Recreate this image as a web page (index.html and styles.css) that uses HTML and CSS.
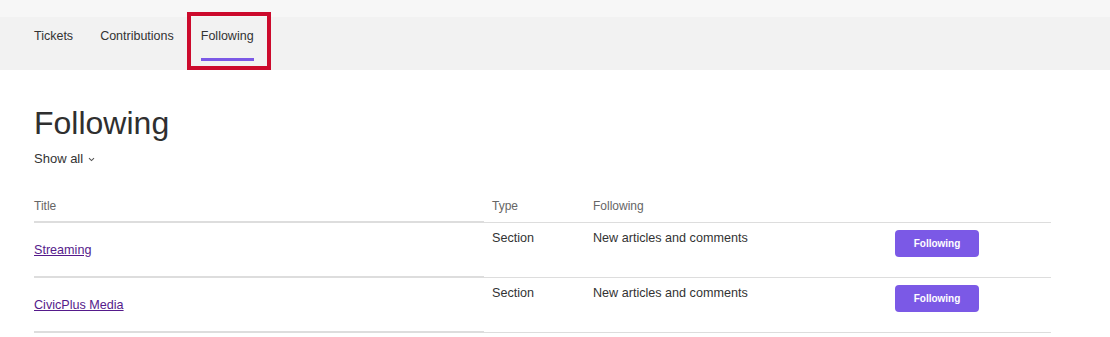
FILE: index.html
```html
<!doctype html>
<html>
	<head>
		<meta charset="utf-8" />
		<title>Following</title>
		<link rel="stylesheet" href="styles.css">
	</head>
	<body>
		<div class="top-strip"></div>
		<div class="nav">
			<a href="#tickets" class="nav-item">Tickets</a>
			<a href="#contributions" class="nav-item">Contributions</a>
			<a href="#following" class="nav-item nav-item-active">Following</a>
			<span class="highlight-box"></span>
		</div>

		<div class="content">
			<h1>Following</h1>
			<a href="#filter" class="filter">Show all
				<svg class="chevron" width="7" height="5" viewBox="0 0 7 5"><path d="M1 1.2 L3.5 3.6 L6 1.2" fill="none" stroke="#555" stroke-width="1.1" /></svg>
			</a>

			<table class="follow-table">
				<colgroup>
					<col class="col-title">
					<col class="col-type">
					<col class="col-following">
					<col>
				</colgroup>
				<thead>
					<tr>
						<th class="cell-title">Title</th>
						<th>Type</th>
						<th>Following</th>
						<th></th>
					</tr>
				</thead>
				<tbody>
					<tr>
						<td class="cell-title"><a href="#streaming" class="item-link">Streaming</a></td>
						<td>Section</td>
						<td>New articles and comments</td>
						<td class="cell-action"><button class="btn">Following</button></td>
					</tr>
					<tr>
						<td class="cell-title"><a href="#civicplus-media" class="item-link">CivicPlus Media</a></td>
						<td>Section</td>
						<td>New articles and comments</td>
						<td class="cell-action"><button class="btn">Following</button></td>
					</tr>
				</tbody>
			</table>
		</div>
	</body>
</html>
```

FILE: styles.css
```css
html, body, div, h1, table, th, td { margin: 0; padding: 0; }
body { font-family: "Liberation Sans", Arial, sans-serif; color: #333; background: #fff; }
a { text-decoration: none; color: #333; }

.top-strip { height: 17px; background: #f7f7f7; }

.nav { position: relative; display: flex; height: 53px; padding-left: 34px; background: #f2f2f2; }
.nav-item { display: block; margin-right: 27px; padding: 10px 0 13px; line-height: 18px; font-size: 12.5px; color: #333; border-bottom: 3px solid transparent; height: 18px; }
.nav-item-active { border-bottom-color: #7b59e6; }
.highlight-box { position: absolute; left: 187px; top: -5px; width: 76px; height: 50px; border: 4px solid #cc0a2c; }

.content { padding: 0 34px; width: 1017px; }
h1 { margin-top: 34px; font-size: 32px; line-height: 38px; font-weight: normal; color: #2f2f2f; }
.filter { display: inline-flex; align-items: center; margin-top: 8px; font-size: 13px; line-height: 18px; color: #333; }
.chevron { margin-left: 5px; margin-top: 1px; }

.follow-table { width: 1017px; margin-top: 30px; border-spacing: 0; table-layout: fixed; font-size: 12.6px; }
.col-title { width: 450px; }
.col-type { width: 101px; }
.col-following { width: 302px; }
th { padding: 0 8px 7px; line-height: 16px; font-size: 12px; font-weight: normal; text-align: left; color: #666; border-bottom: 1px solid #ddd; vertical-align: top; }
td { padding: 6px 8px 0; line-height: 18px; text-align: left; vertical-align: top; border-bottom: 1px solid #ddd; }
.follow-table .cell-title { padding-left: 0; border-bottom-width: 2px; vertical-align: middle; }
td.cell-title { padding-top: 0; padding-bottom: 0; }
td.cell-action { padding: 7px 8px 20px; }
.item-link { color: #551a8b; text-decoration: underline; }

.btn { display: block; width: 84px; height: 27px; padding: 0; border: 0; border-radius: 4px; background: #7b59e6; color: #fff; font-family: "Liberation Sans", Arial, sans-serif; font-size: 10px; font-weight: bold; cursor: pointer; }
```
